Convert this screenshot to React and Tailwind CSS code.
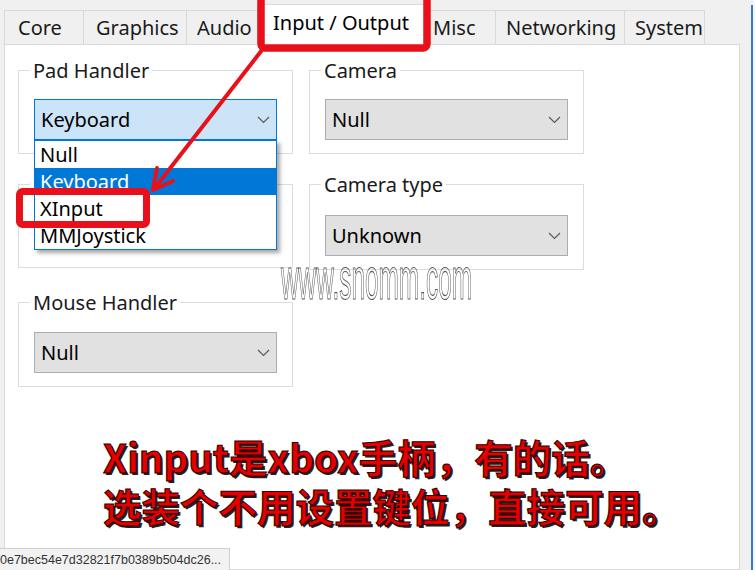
import React from 'react';

const tabs = [
  { label: 'Core', w: 'w-[79px]', pl: 'pl-[13px]' },
  { label: 'Graphics', w: 'w-[103px]', pl: 'pl-[12px]' },
  { label: 'Audio', w: 'w-[71px]', pl: 'pl-[10px]' },
  { label: 'Input / Output', w: 'w-[168px]', active: true },
  { label: 'Misc', w: 'w-[70px]', pl: 'pl-[7px]' },
  { label: 'Networking', w: 'w-[129px]', pl: 'pl-[10px]' },
  { label: 'System', w: 'w-[81px]', pl: 'pl-[10px]' },
];

const Chevron = () => (
  <svg width="13" height="8" viewBox="0 0 13 8" className="shrink-0">
    <path d="M1 1 L6.5 6.5 L12 1" fill="none" stroke="#5a5a5a" strokeWidth="1.2" />
  </svg>
);

const Combo = ({ value, focused, top = 'mt-[15px]', children }) => (
  <div className={`relative ${top}`}>
    <div
      className={
        focused
          ? 'h-[41px] flex items-center justify-between pl-[6px] pr-[6px] border border-[#0078d7] bg-[#cce4f7]'
          : 'h-[41px] flex items-center justify-between pl-[6px] pr-[6px] border border-[#adadad] bg-[#e1e1e1]'
      }
    >
      <span className="text-[20px] leading-[27px] text-black">{value}</span>
      <Chevron />
    </div>
    {children}
  </div>
);

const Group = ({ title, className = '', children }) => (
  <fieldset className={`w-[275px] border border-[#dcdcdc] px-0 pb-[13px] min-w-0 ${className}`}>
    <legend className="ml-[11px] px-[3px] text-[20px] leading-[27px] text-[#1a1a1a]">{title}</legend>
    <div className="px-[15px]">{children}</div>
  </fieldset>
);

const App = () => {
  return (
    <div className="relative w-[755px] h-[570px] overflow-hidden bg-[#f0f0f0] flex font-['Noto_Sans',sans-serif]">
      {/* Left: tab widget */}
      <div className="w-[751px] h-full flex flex-col pl-[4px] pt-[10px]">
        {/* Tab strip */}
        <div className="h-[34px] flex items-end shrink-0">
          {tabs.map((t) =>
            t.active ? (
              <div
                key={t.label}
                className={`${t.w} relative z-[1] h-[41px] -mb-px flex justify-center pt-[4px] bg-white border border-b-0 border-[#d9d9d9] text-[20px] leading-[27px] text-black`}
              >
                {t.label}
              </div>
            ) : (
              <div
                key={t.label}
                className={`${t.w} ${t.pl} h-[34px] flex items-center bg-[#f0f0f0] border border-b-0 border-r-0 border-[#d9d9d9] last:border-r text-[20px] leading-[27px] text-[#1a1a1a]`}
              >
                {t.label}
              </div>
            )
          )}
        </div>

        {/* Panel */}
        <div className="w-[736px] flex-1 bg-white border border-[#d9d9d9] pl-[13px] pt-[12px]">
          <div className="grid grid-cols-[275px_275px] gap-x-[16px] gap-y-[17px] items-start">
            <Group title="Pad Handler">
              <Combo value="Keyboard" focused>
                {/* Open dropdown list */}
                <div className="absolute left-0 top-full z-10 w-full bg-white border border-[#0078d7] shadow-[3px_3px_4px_rgba(0,0,0,0.35)]">
                  {['Null', 'Keyboard', 'XInput', 'MMJoystick'].map((o) => (
                    <div
                      key={o}
                      className={
                        o === 'Keyboard'
                          ? 'h-[27px] pl-[5px] text-[20px] leading-[27px] bg-[#0078d7] text-white'
                          : 'h-[27px] pl-[5px] text-[20px] leading-[27px] text-black'
                      }
                    >
                      {o}
                    </div>
                  ))}
                </div>
              </Combo>
            </Group>
            <Group title="Camera">
              <Combo value="Null" />
            </Group>
            <Group title="Keyboard Handler" className="pb-[17px]">
              <Combo value="Null" top="mt-[11px]" />
            </Group>
            <Group title="Camera type">
              <Combo value="Unknown" top="mt-[17px]" />
            </Group>
            <Group title="Mouse Handler" className="mt-[2px]">
              <Combo value="Null" top="mt-[16px]" />
            </Group>
          </div>

          {/* Annotation text */}
          <div className="mt-[45px] ml-[85px] font-['Noto_Sans_CJK_SC',sans-serif] font-bold text-[38.5px] leading-[49px] text-[#e40000] [-webkit-text-stroke:1px_#2a0000] [text-shadow:2px_2px_0_#222]">
            <div>Xinput是xbox手柄，有的话。</div>
            <div>选装个不用设置键位，直接可用。</div>
          </div>
        </div>
      </div>

      {/* Right edge */}
      <div className="w-[2px] h-full bg-[#2f7ad3] mt-[5px]"></div>
      <div className="flex-1 h-full bg-[#f7f7f7]"></div>

      {/* Watermark */}
      <svg className="absolute inset-0 z-20 pointer-events-none grayscale" width="755" height="570" viewBox="0 0 755 570">
        <text
          x="281"
          y="299"
          fontFamily="Liberation Sans, sans-serif"
          fontSize="60"
          textLength="191"
          lengthAdjust="spacingAndGlyphs"
          fill="none"
          stroke="#555555"
          strokeWidth="1.1"
        >
          www.snomm.com
        </text>
      </svg>

      {/* Red markup */}
      <svg className="absolute inset-0 z-30 pointer-events-none" width="755" height="570" viewBox="0 0 755 570">
        <rect x="261" y="-10" width="166" height="58" rx="4" fill="none" stroke="#e8101a" strokeWidth="7.5" />
        <rect x="19.5" y="191.5" width="127" height="33" rx="3" fill="none" stroke="#e8101a" strokeWidth="7" />
        <line x1="262" y1="50" x2="154" y2="189" stroke="#e8101a" strokeWidth="4" strokeLinecap="round" />
        <polyline points="173,181 153,190 157,168" fill="none" stroke="#e8101a" strokeWidth="4" strokeLinecap="round" strokeLinejoin="round" />
      </svg>

      {/* Browser status tooltip */}
      <div className="absolute left-0 bottom-0 z-40 w-[230px] h-[22px] bg-[#f2f2f2] border-t border-r border-[#cfcfcf] pt-[3px] font-['Liberation_Sans',sans-serif] text-[12.5px] leading-[16px] text-[#333] whitespace-nowrap overflow-hidden">
        0e7bec54e7d32821f7b0389b504dc26...
      </div>
    </div>
  );
};

export default App;
